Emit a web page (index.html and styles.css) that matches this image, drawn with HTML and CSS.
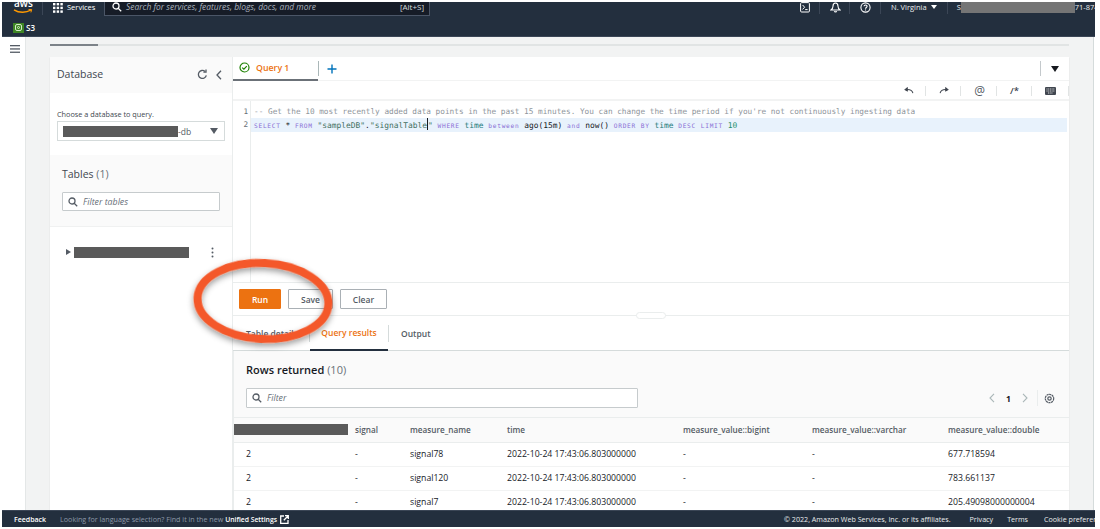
FILE: index.html
```html
<!DOCTYPE html>
<html lang="en">
<head>
<meta charset="utf-8">
<title>Timestream query editor</title>
<link rel="stylesheet" href="styles.css">
</head>
<body>
<div class="console">
  <header class="nav">
    <div class="nav-main">
      <div class="aws-logo">
        <span class="aws-text">aws</span>
        <svg class="aws-smile" width="20" height="5" viewBox="0 0 20 5"><path d="M1 .8C6 4 13 4 18 1" fill="none" stroke="#f90" stroke-width="1.4"/><path d="M15.5.6l3.2-.2-.8 3" fill="none" stroke="#f90" stroke-width="1"/></svg>
      </div>
      <span class="nav-sep"></span>
      <svg class="grid-icon" width="10" height="10" viewBox="0 0 10 10" fill="#fff"><rect width="2.4" height="2.4"/><rect x="3.7" width="2.4" height="2.4"/><rect x="7.4" width="2.4" height="2.4"/><rect y="3.7" width="2.4" height="2.4"/><rect x="3.7" y="3.7" width="2.4" height="2.4"/><rect x="7.4" y="3.7" width="2.4" height="2.4"/><rect y="7.4" width="2.4" height="2.4"/><rect x="3.7" y="7.4" width="2.4" height="2.4"/><rect x="7.4" y="7.4" width="2.4" height="2.4"/></svg>
      <span class="services">Services</span>
      <div class="global-search">
        <svg width="10" height="10" viewBox="0 0 10 10" fill="none" stroke="#fff" stroke-width="1.3"><circle cx="4" cy="4" r="3"/><path d="M6.2 6.2l3 3"/></svg>
        <span class="search-text">Search for services, features, blogs, docs, and more</span>
        <span class="search-key">[Alt+S]</span>
      </div>
      <div class="nav-right">
        <svg class="n-cloud" width="10" height="11" viewBox="0 0 10 11" fill="none" stroke="#fff" stroke-width="1"><rect x=".6" y=".6" width="8.8" height="9.4" rx="1"/><path d="M2.6 3l2 2.2-2 2.2M5.2 7.6h2.4"/></svg>
        <span class="n-div"></span>
        <svg class="n-bell" width="11" height="11" viewBox="0 0 11 11" fill="none" stroke="#fff" stroke-width="1.1"><path d="M5.5 1C3.6 1 3 2.6 3 4.2 3 6 2.2 7 1 8h9C8.800 7 8 6 8 4.200 8 2.600 7.400 1 5.500 1zM4.300 9.300c.3.800 2.100.8 2.400 0"/></svg>
        <span class="n-div"></span>
        <svg class="n-help" width="11" height="11" viewBox="0 0 11 11" fill="none" stroke="#fff" stroke-width="1.1"><circle cx="5.500" cy="5.500" r="4.600"/><path d="M4 4.300c.2-1.700 3.100-1.600 3.100 0 0 1.200-1.600 1.100-1.600 2.500M5.500 7.600v.9"/></svg>
        <span class="n-div"></span>
        <span class="region">N. Virginia</span><span class="region-caret"></span>
        <span class="n-div"></span>
        <span class="account acct-first">S</span><span class="redact acct-redact"></span><span class="account">71-8749</span>
      </div>
    </div>
    <div class="nav-sub">
      <span class="s3-badge"><svg width="9" height="9" viewBox="0 0 9 9" fill="none" stroke="#d5ecc8" stroke-width="1"><rect x="1.500" y="1.500" width="6" height="6" rx="1.500"/><circle cx="4.500" cy="4.500" r="1"/></svg></span>
      <span class="s3-label">S3</span>
    </div>
  </header>

  <main class="main">
    <aside class="rail">
      <svg class="burger" width="10" height="8" viewBox="0 0 10 8" fill="#545b64"><rect width="10" height="1.300"/><rect y="3.300" width="10" height="1.300"/><rect y="6.600" width="10" height="1.300"/></svg>
    </aside>
    <section class="content">
      <div class="page-tabs"><span class="page-tab-active"></span></div>
      <div class="workspace">
        <aside class="db-panel">
          <div class="db-head">
            <h2 class="db-title">Database</h2>
            <svg class="refresh" width="11" height="11" viewBox="0 0 11 11" fill="none" stroke="#545b64" stroke-width="1.300"><path d="M9.300 6.300A4 4 0 1 1 8 2.400"/><path d="M9 .5v2.600H6.400" /></svg>
            <svg class="collapse" width="6" height="10" viewBox="0 0 6 10" fill="none" stroke="#545b64" stroke-width="1.300"><path d="M5 .8L1 5l4 4.200"/></svg>
          </div>
          <div class="db-choose">
            <label class="db-label">Choose a database to query.</label>
            <div class="db-select">
              <span class="redact db-redact"></span><span class="db-suffix">-db</span>
              <span class="caret-down"></span>
            </div>
          </div>
          <div class="tables-box">
            <h3 class="tables-title">Tables <span class="muted">(1)</span></h3>
            <div class="input filter-tables">
              <svg width="10" height="10" viewBox="0 0 10 10" fill="none" stroke="#545b64" stroke-width="1.300"><circle cx="4" cy="4" r="3"/><path d="M6.200 6.200l3 3"/></svg>
              <span class="placeholder">Filter tables</span>
            </div>
          </div>
          <div class="table-tree">
            <span class="caret-right"></span>
            <span class="redact tree-redact"></span>
            <svg class="kebab" width="3" height="11" viewBox="0 0 3 11" fill="#545b64"><circle cx="1.500" cy="1.500" r="1"/><circle cx="1.500" cy="5.500" r="1"/><circle cx="1.500" cy="9.500" r="1"/></svg>
          </div>
        </aside>

        <section class="editor-panel">
          <div class="query-tabs">
            <div class="query-tab">
              <svg width="11" height="11" viewBox="0 0 11 11" fill="none" stroke="#1d8102" stroke-width="1.200"><circle cx="5.500" cy="5.500" r="4.500"/><path d="M3.200 5.600l1.700 1.600 2.900-3"/></svg>
              <span class="query-name">Query 1</span>
            </div>
            <span class="tab-div"></span>
            <svg class="plus" width="10" height="10" viewBox="0 0 10 10" stroke="#0073bb" stroke-width="1.400"><path d="M5 .5v9M.5 5h9"/></svg>
            <span class="tabs-fill"></span>
            <span class="tab-div-r"></span>
            <span class="caret-down dark"></span>
          </div>
          <div class="editor-tools">
            <svg width="10" height="7" viewBox="0 0 11 8" fill="none" stroke="#414750" stroke-width="1.200"><path d="M10 7C9 3.500 6 2.500 2 3"/><path d="M1 3l2.500-2v3.500z" fill="#414750"/></svg>
            <span class="tool-div"></span>
            <svg width="10" height="7" viewBox="0 0 11 8" fill="none" stroke="#414750" stroke-width="1.200"><path d="M1 7C2 3.500 5 2.500 9 3"/><path d="M10 3L7.500 1v3.500z" fill="#414750"/></svg>
            <span class="tool-div"></span>
            <span class="tool-at">@</span>
            <span class="tool-div"></span>
            <span class="tool-comment">/*</span>
            <span class="tool-div"></span>
            <svg width="11" height="8" viewBox="0 0 11 8"><rect width="11" height="8" rx="1" fill="#414750"/><path d="M1.500 2h8M1.500 4h8M3 6h5" stroke="#fff" stroke-width=".8" stroke-dasharray="1 .7"/></svg>
            <span class="tool-div last"></span>
          </div>
          <div class="code-area">
            <div class="gutter"><span>1</span><span>2</span></div>
            <div class="code">
              <div class="line comment">-- Get the 10 most recently added data points in the past 15 minutes. You can change the time period if you're not continuously ingesting data</div>
              <div class="line active"><span class="kw">SELECT</span> * <span class="kw">FROM</span> <span class="str">"sampleDB"</span>.<span class="str">"signalTable<i class="cursor"></i>"</span> <span class="kw">WHERE</span> <span class="col">time</span> <span class="kw">between</span> <span class="fn">ago</span>(15m) <span class="kw">and</span> <span class="fn">now</span>() <span class="kw">ORDER</span> <span class="kw">BY</span> <span class="col">time</span> <span class="kw">DESC</span> <span class="kw">LIMIT</span> <span class="num">10</span></div>
            </div>
          </div>
          <div class="actions">
            <button class="btn primary">Run</button>
            <button class="btn">Save</button>
            <button class="btn btn-clear">Clear</button>
          </div>
          <nav class="result-tabs">
            <span class="r-tab">Table details</span>
            <span class="r-tab current">Query results</span>
            <span class="r-tab">Output</span>
            <span class="drag-handle"></span>
          </nav>
          <div class="results">
            <div class="results-head">
              <h3 class="rows-title">Rows returned <span class="muted">(10)</span></h3>
              <div class="results-filter">
                <div class="input filter-rows">
                  <svg width="10" height="10" viewBox="0 0 10 10" fill="none" stroke="#545b64" stroke-width="1.300"><circle cx="4" cy="4" r="3"/><path d="M6.200 6.200l3 3"/></svg>
                  <span class="placeholder">Filter</span>
                </div>
                <div class="pager">
                  <svg width="6" height="10" viewBox="0 0 6 10" fill="none" stroke="#aab7b8" stroke-width="1.100"><path d="M5 .8L1 5l4 4.200"/></svg>
                  <span class="page-num">1</span>
                  <svg width="6" height="10" viewBox="0 0 6 10" fill="none" stroke="#aab7b8" stroke-width="1.100"><path d="M1 .8L5 5 1 9.200"/></svg>
                  <span class="pager-div"></span>
                  <svg width="11" height="11" viewBox="0 0 11 11" fill="none" stroke="#545b64" stroke-width="1.200"><circle cx="5.500" cy="5.500" r="1.700"/><circle cx="5.500" cy="5.500" r="4.200" stroke-dasharray="2.200 .5"/></svg>
                </div>
              </div>
            </div>
            <table class="grid">
              <colgroup><col class="c1"><col class="c2"><col class="c3"><col class="c4"><col class="c5"><col class="c6"><col class="c7"></colgroup>
              <thead>
                <tr><th class="redacted-th"><span class="redact th-redact"></span></th><th>signal</th><th>measure_name</th><th>time</th><th>measure_value::bigint</th><th>measure_value::varchar</th><th>measure_value::double</th></tr>
              </thead>
              <tbody>
                <tr><td>2</td><td>-</td><td>signal78</td><td>2022-10-24 17:43:06.803000000</td><td>-</td><td>-</td><td>677.718594</td></tr>
                <tr><td>2</td><td>-</td><td>signal120</td><td>2022-10-24 17:43:06.803000000</td><td>-</td><td>-</td><td>783.661137</td></tr>
                <tr><td>2</td><td>-</td><td>signal7</td><td>2022-10-24 17:43:06.803000000</td><td>-</td><td>-</td><td>205.49098000000004</td></tr>
              </tbody>
            </table>
          </div>
        </section>
      </div>
    </section>
  </main>

  <footer class="foot">
    <span class="foot-feedback">Feedback</span>
    <span class="foot-lang">Looking for language selection? Find it in the new <b class="foot-link">Unified Settings</b></span>
    <svg class="foot-ext" width="9" height="9" viewBox="0 0 9 9" fill="none" stroke="#fff" stroke-width="1.300"><path d="M4 1H.7v7.300H8V5M5 .7h3.300V4M8 1L3.800 5.200"/></svg>
    <span class="foot-fill"></span>
    <span class="foot-copy">© 2022, Amazon Web Services, Inc. or its affiliates.</span>
    <span class="foot-item privacy">Privacy</span>
    <span class="foot-item terms">Terms</span>
    <span class="foot-item cookie">Cookie preferences</span>
  </footer>
</div>

<svg class="annotation" width="160" height="100" viewBox="0 0 160 100">
  <defs><filter id="ring-shadow" x="-20%" y="-20%" width="140%" height="150%"><feDropShadow dx="0" dy="3" stdDeviation="3" flood-color="#000" flood-opacity=".4"/></filter></defs>
  <ellipse cx="80" cy="49" rx="65.500" ry="38" transform="rotate(3 80 49)" fill="none" stroke="#f4592a" stroke-width="8" filter="url(#ring-shadow)"/>
</svg>
</body>
</html>
```

FILE: styles.css
```css
* { box-sizing: border-box; }
html, body { margin: 0; height: 100%; background: #fff; overflow: hidden; }
body { font-family: "Open Sans", "Noto Sans", sans-serif; color: #16191f; position: relative; }
h2, h3 { margin: 0; font-weight: 400; }

.console { width: 1093px; height: 527px; margin-left: 2px; padding-top: 2px; display: flex; flex-direction: column; }

/* top navigation */
.nav { height: 35px; background: #232f3e; color: #fff; flex: none; border-bottom: 1px solid #3b4656; }
.nav-main { height: 17px; display: flex; align-items: flex-start; overflow: hidden; }
.aws-logo { width: 31px; height: 13px; position: relative; overflow: hidden; flex: none; margin-left: 9px; }
.aws-text { display: block; font: 600 10px/10px "Open Sans", sans-serif; margin: -4px 0 0 3px; color: #fff; }
.aws-smile { display: block; margin: 1px 0 0 2px; }
.nav-sep { width: 1px; height: 13px; background: #3b4656; flex: none; }
.grid-icon { flex: none; margin: 1px 0 0 10px; }
.services { font-size: 7.500px; line-height: 11px; margin-left: 4px; width: 37px; flex: none; }
.global-search { width: 326px; height: 14px; background: #161c27; border: 1px solid #4b5667; border-top: 0; display: flex; align-items: flex-start; flex: none; padding: 0 5px 0 6px; }
.global-search svg { margin: 0 0 0 1px; flex: none; }
.search-text { font-size: 8.450px; line-height: 9px; font-style: italic; color: #aab2bd; margin-left: 4px; flex: 1; white-space: nowrap; }
.search-key { font-size: 8px; line-height: 9px; color: #d5dbdb; }
.nav-right { display: flex; align-items: flex-start; margin-left: 370px; flex: none; height: 13px; white-space: nowrap; }
.nav-right svg { flex: none; }
.n-cloud { margin-right: 9px; }
.n-div { width: 1px; height: 12px; background: #3b4656; flex: none; }
.n-bell { margin: 0 8px 0 10px; }
.n-help { margin: 0 9px 0 10px; }
.region { font-size: 7.500px; line-height: 10px; color: #eaeded; margin-left: 10px; }
.region-caret { border: 3px solid transparent; border-top: 4px solid #fff; border-bottom: 0; margin: 3px 10px 0 4px; }
.account { font-size: 7.500px; line-height: 10px; color: #eaeded; }
.acct-first { margin-left: 9px; }
.redact { background: #5a5a5a; display: block; flex: none; }
.acct-redact { width: 114px; height: 11px; background: #757575; }
.nav-sub { height: 17px; display: flex; align-items: center; padding: 0 0 0 11px; }
.s3-badge { width: 11px; height: 10px; background: #3f8624; display: flex; align-items: center; justify-content: center; }
.s3-label { font-size: 8px; font-weight: 600; margin-left: 2px; }

/* main area */
.main { flex: 1; min-height: 0; display: flex; overflow: hidden; background: #fff; padding-right: 1px; }
.rail { width: 24px; background: #fff; border-right: 1px solid #e4e7e7; padding: 8px 0 0 8px; flex: none; }
.burger { display: block; }
.content { flex: 1; background: #f2f3f3; padding: 7px 0 0 24px; min-width: 0; border-right: 1px solid #d5dbdb; }
.page-tabs { width: 1019px; height: 2px; background: #e1e4e4; }
.page-tab-active { display: block; width: 48px; height: 2px; background: #7c8288; }
.workspace { display: flex; margin-top: 11px; width: 1019px; height: 500px; box-shadow: 0 1px 1px rgba(0,28,36,.15); }

/* database panel */
.db-panel { width: 183px; background: #fff; flex: none; border-right: 1px solid #eaeded; }
.db-head { height: 36px; background: #fafafa; display: flex; align-items: center; padding: 0 10px 0 7px; }
.db-title { font-size: 10.500px; line-height: 14px; color: #414750; flex: 1; margin-bottom: 3px; }
.refresh { margin-right: 8px; margin-bottom: 1px; }
.collapse { margin-bottom: 1px; }
.db-choose { height: 62px; padding: 16px 7px 0; }
.db-label { display: block; font-size: 7.300px; line-height: 10px; color: #414750; white-space: nowrap; }
.db-select { margin-top: 2px; height: 20px; border: 1px solid #d5dbdb; display: flex; align-items: center; padding: 0 6px 0 5px; background: #fff; }
.db-redact { width: 115px; height: 11px; }
.db-suffix { font-size: 8.500px; color: #545b64; flex: 1; }
.caret-down { border: 4px solid transparent; border-top: 6px solid #545b64; border-bottom: 0; display: block; flex: none; }
.caret-down.dark { border-top-color: #16191f; }
.tables-box { height: 72px; background: #fafafa; border-bottom: 1px solid #f0f1f1; padding: 12px 12px 0; }
.tables-title { font-size: 10.500px; line-height: 14px; color: #414750; }
.muted { color: #687078; }
.input { border: 1px solid #c6cbcd; background: #fff; display: flex; align-items: center; border-radius: 1px; }
.filter-tables { margin-top: 11px; height: 19px; padding-left: 5px; }
.placeholder { font-size: 8.800px; font-style: italic; color: #687078; margin-left: 5px; }
.table-tree { margin-top: 10px; height: 30px; display: flex; align-items: center; padding: 0 0 0 16px; }
.caret-right { border: 3.500px solid transparent; border-left: 5px solid #545b64; border-right: 0; margin-right: 3px; }
.tree-redact { width: 115px; height: 11px; }
.kebab { margin-left: 22px; }

/* editor */
.editor-panel { flex: 1; min-width: 0; background: #fff; display: flex; flex-direction: column; }
.query-tabs { height: 24px; display: flex; align-items: center; flex: none; border-bottom: 1px solid #f2f3f3; }
.query-tab { width: 85px; height: 24px; display: flex; align-items: center; padding-left: 6px; border-bottom: 2px solid #6b7178; flex: none; }
.query-name { font-size: 8.800px; font-weight: 600; color: #ec7211; margin-left: 6px; }
.tab-div { width: 1px; height: 15px; background: #aab7b8; flex: none; }
.plus { margin-left: 8px; flex: none; }
.tabs-fill { flex: 1; }
.tab-div-r { width: 1px; height: 15px; background: #c4c9cc; margin-right: 10px; }
.query-tabs .caret-down { margin-right: 10px; }
.editor-tools { height: 20px; flex: none; display: flex; align-items: center; justify-content: flex-end; border-bottom: 2px solid #f2f3f3; padding-top: 1px; }
.tool-div { width: 1px; height: 10px; background: #e1e4e4; margin: 0 13px 0 11px; flex: none; }
.tool-div.last { margin: 0 0 0 12px; }
.tool-at { font-size: 12px; line-height: 12px; color: #545b64; }
.tool-comment { font-size: 9.500px; line-height: 11px; font-weight: 600; color: #414750; width: 10px; }
.code-area { height: 182px; flex: none; display: flex; border-bottom: 1px solid #eaeded; }
.gutter { width: 18px; flex: none; border-right: 1px solid #eaeded; display: flex; flex-direction: column; align-items: flex-end; padding: 4px 2px 0 0; font: 7.680px/13px "DejaVu Sans Mono", monospace; color: #687078; }
.code { flex: 1; min-width: 0; padding-top: 4px; font: 7.680px/13px "DejaVu Sans Mono", monospace; }
.line { height: 13px; padding-left: 3px; white-space: pre; }
.line.active { background: #e8f2fc; width: 816px; height: 14px; line-height: 12px; font-size: 7.920px; }
.comment { color: #8f969c; font-size: 7.740px; }
.kw { color: #8a6fd6; font-size: 6.200px; letter-spacing: .72px; }
.str { color: #3f6f5f; }
.col { color: #1d7a7a; }
.fn { color: #16191f; }
.num { color: #1d8f6a; }
.cursor { display: inline-block; width: 1px; height: 12px; background: #16191f; margin: 0 0 -2px; vertical-align: baseline; }
.actions { height: 32px; flex: none; display: flex; align-items: center; gap: 7px; padding-left: 6px; }
.btn { height: 20px; padding: 0; width: 45px; font: 600 8.500px "Open Sans", sans-serif; color: #545b64; background: #fff; border: 1px solid #aab0b5; border-radius: 1px; }
.btn.primary { width: 42px; background: #ec7211; border-color: #ec7211; color: #fff; }
.btn-clear { width: 47px; }
.result-tabs { height: 36px; flex: none; display: flex; border-top: 1px solid #eaeded; border-bottom: 1px solid #d5dbdb; position: relative; align-items: stretch; }
.r-tab { font-size: 8.500px; font-weight: 600; color: #545b64; display: flex; align-items: center; padding: 0 13px; position: relative; white-space: nowrap; }
.r-tab:first-child { width: 77px; }
.r-tab.current { color: #ec7211; width: 78px; border-bottom: 2px solid #232f3e; justify-content: center; padding: 0; margin-bottom: -1px; }
.r-tab.current::before, .r-tab.current::after { content: ""; position: absolute; top: 9px; width: 1px; height: 17px; background: #d5dbdb; }
.r-tab.current::before { left: -1px; }
.r-tab.current::after { right: -1px; }
.drag-handle { position: absolute; left: 403px; top: -4px; width: 30px; height: 7px; background: #fff; border: 1px solid #eaeded; border-radius: 4px; }
.results { flex: 1; background: #fff; border-left: 1px solid #eaeded; }
.results-head { height: 67px; background: #fafafa; padding: 11px 0 0 12px; border-bottom: 1px solid #eaeded; }
.rows-title { font-size: 11px; line-height: 15px; font-weight: 600; color: #16191f; }
.results-head .muted { font-weight: 400; }
.results-filter { display: flex; align-items: center; margin-top: 11px; }
.filter-rows { width: 392px; height: 20px; padding-left: 5px; }
.pager { display: flex; align-items: center; margin-left: 351px; }
.page-num { font-size: 8.500px; font-weight: 700; color: #16191f; margin: 0 11px 0 11px; }
.pager-div { width: 1px; height: 16px; background: #eaeded; margin: 0 6px 0 9px; }
.grid { table-layout: fixed; width: 835px; border-collapse: collapse; }
.c1 { width: 108px; } .c2 { width: 55px; } .c3 { width: 97px; } .c4 { width: 176px; }
.c5 { width: 129px; } .c6 { width: 136px; } .c7 { width: 134px; }
.grid th { height: 24px; background: #fafafa; font-size: 8.200px; font-weight: 600; color: #545b64; text-align: left; padding: 0 0 0 13px; border-bottom: 1px solid #eaeded; white-space: nowrap; }
.grid td { height: 24px; font-size: 8.700px; color: #16191f; padding: 0 0 0 13px; border-bottom: 1px solid #f2f3f3; white-space: nowrap; }
.grid tbody td:first-child { padding-left: 12px; }
.grid .redacted-th { padding: 0; position: relative; z-index: 1; }
.th-redact { width: 114px; height: 11px; }

/* footer */
.foot { height: 17px; flex: none; background: #232f3e; color: #d5dbdb; display: flex; align-items: center; font-size: 7.150px; white-space: nowrap; overflow: hidden; padding-left: 12px; border-top: 1px solid #3b4656; }
.foot-feedback { color: #fff; font-weight: 600; font-size: 7px; }
.foot-lang { color: #8d99a8; margin-left: 14px; }
.foot-link { color: #fff; font-weight: 600; font-size: 6.800px; }
.foot-ext { margin-left: 3px; }
.foot-fill { flex: 1; }
.foot-copy { color: #eaeded; }
.foot-item { color: #eaeded; }
.privacy { margin-left: 19px; }
.terms { margin-left: 14px; }
.cookie { width: 51px; overflow: hidden; flex: none; margin-left: 16px; }

/* red annotation ring drawn over the screenshot */
.annotation { position: absolute; left: 183px; top: 252px; pointer-events: none; }
```
